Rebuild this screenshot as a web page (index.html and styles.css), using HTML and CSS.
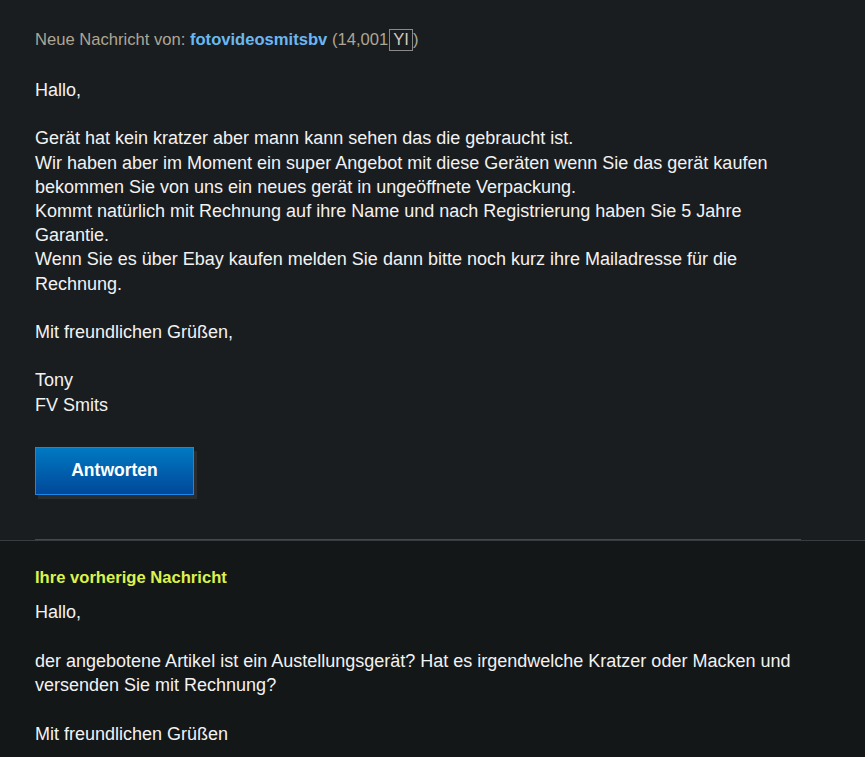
FILE: index.html
```html
<!DOCTYPE html>
<html lang="de">
<head>
<meta charset="utf-8">
<link rel="stylesheet" href="styles.css">
</head>
<body>
<section class="current">
  <div class="from">Neue Nachricht von: <a class="user">fotovideosmitsbv</a> (14,001<span class="star">YI</span>)</div>
  <div class="msg">
    <p>Hallo,</p>
    <p>Gerät hat kein kratzer aber mann kann sehen das die gebraucht ist.<br>
    Wir haben aber im Moment ein super Angebot mit diese Geräten wenn Sie das gerät kaufen bekommen Sie von uns ein neues gerät in ungeöffnete Verpackung.<br>
    Kommt natürlich mit Rechnung auf ihre Name und nach Registrierung haben Sie 5 Jahre Garantie.<br>
    Wenn Sie es über Ebay kaufen melden Sie dann bitte noch kurz ihre Mailadresse für die Rechnung.</p>
    <p>Mit freundlichen Grüßen,</p>
    <p>Tony<br>FV Smits</p>
  </div>
  <button class="reply">Antworten</button>
  <div class="rule"></div>
</section>
<section class="previous">
  <h3 class="prev-title">Ihre vorherige Nachricht</h3>
  <div class="msg">
    <p>Hallo,</p>
    <p>der angebotene Artikel ist ein Austellungsgerät? Hat es irgendwelche Kratzer oder Macken und versenden Sie mit Rechnung?</p>
    <p>Mit freundlichen Grüßen</p>
  </div>
</section>
</body>
</html>
```
FILE: styles.css
```css
html, body {
  margin: 0;
  padding: 0;
  background: #141718;
  font-family: "Liberation Sans", Arial, sans-serif;
}
.current {
  background: #1a1d1f;
  padding: 29px 64px 0 35px;
  border-bottom: 1px solid #3a3d3f;
}
.from {
  color: #aea695;
  font-size: 16.6px;
  line-height: 22px;
}
.user {
  color: #6ab8f2;
  font-weight: bold;
  text-decoration: none;
}
.star {
  display: inline-block;
  border: 1px solid #8a8a8a;
  color: #cfcac0;
  padding: 0 3px 0 3px;
  line-height: 20px;
  margin-left: 1px;
}
.msg {
  color: #f2f2f2;
  font-size: 18px;
  line-height: 24.2px;
  margin-top: 27px;
}
.msg p {
  margin: 0 0 24.2px;
}
.reply {
  display: block;
  margin-top: 30px;
  width: 159px;
  height: 48px;
  border: 1px solid #1a86e8;
  background: linear-gradient(#0079c2, #00489a);
  color: #fff;
  font-family: "Liberation Sans", Arial, sans-serif;
  font-size: 17.5px;
  font-weight: bold;
  box-shadow: 3px 4px 0 #2a2d2f;
  padding: 0;
}
.rule {
  margin-top: 44px;
  height: 1px;
  background: #45484a;
}
.previous {
  padding: 27px 35px 20px;
}
.prev-title {
  margin: 0;
  color: #dcf24e;
  font-size: 16.6px;
  line-height: 20px;
  font-weight: bold;
}
.previous .msg {
  margin-top: 12px;
  line-height: 24.5px;
}
.previous .msg p {
  margin-bottom: 24.5px;
}
```
